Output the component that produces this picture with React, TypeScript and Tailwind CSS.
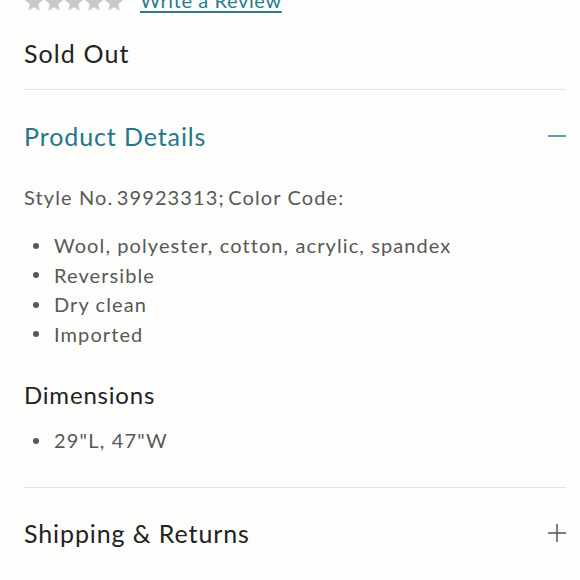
const Star = () => (
  <svg width="20" height="19" viewBox="0 0 24 23" className="fill-[#c9c9c9]">
    <path d="M12 0l3.1 7.6 8.2.6-6.3 5.3 2 8-7-4.4-7 4.4 2-8L.7 8.2l8.2-.6z" />
  </svg>
);

const Minus = () => (
  <svg width="18" height="18" viewBox="0 0 18 18" className="stroke-[#2a7d8e]">
    <line x1="0" y1="9" x2="18" y2="9" strokeWidth="1.5" />
  </svg>
);

const Plus = () => (
  <svg width="18" height="18" viewBox="0 0 18 18" className="stroke-[#555]">
    <line x1="0" y1="9" x2="18" y2="9" strokeWidth="1.5" />
    <line x1="9" y1="0" x2="9" y2="18" strokeWidth="1.5" />
  </svg>
);

const materials = ['Wool, polyester, cotton, acrylic, spandex', 'Reversible', 'Dry clean', 'Imported'];

export default function App() {
  return (
    <div
      className="w-[580px] h-[580px] overflow-hidden bg-[#fdfdfb] pl-[24px] pr-[14px] text-[#222]"
      style={{ fontFamily: 'Lato, "Noto Sans", sans-serif' }}
    >
      {/* rating row, cut off at the top */}
      <div className="flex items-end -mt-[12px] h-[24px]">
        <div className="flex">
          <Star />
          <Star />
          <Star />
          <Star />
          <Star />
        </div>
        <a className="ml-[16px] text-[20px] leading-[24px] text-[#2a7d8e] underline underline-offset-[3px] tracking-[0.6px]">
          Write a Review
        </a>
      </div>

      <div className="pt-[28px] pb-[23px] text-[25px] leading-[26px] tracking-[1.1px]">Sold Out</div>

      {/* Product Details */}
      <div className="border-t border-[#e2e2e0]">
        <div className="flex items-center justify-between pt-[32px] pb-[35px]">
          <span className="text-[25px] leading-[28px] text-[#21788a] tracking-[0.9px]">Product Details</span>
          <Minus />
        </div>
        <div className="text-[20px] leading-[24px] text-[#585858] tracking-[1.1px]">
          Style No.&thinsp;39923313;&thinsp;Color Code:
        </div>
        <ul className="mt-[22px] text-[20px] leading-[29.5px] text-[#585858] tracking-[1.1px]">
          {materials.map((m) => (
            <li key={m} className="flex items-center">
              <span className="w-[6px] h-[6px] rounded-full bg-[#585858] ml-[9px] mr-[15px]" />
              {m}
            </li>
          ))}
        </ul>
        <div className="mt-[33px] text-[24px] leading-[26px] tracking-[0.8px]">Dimensions</div>
        <ul className="mt-[18px] text-[20px] leading-[29px] text-[#585858] tracking-[1.2px]">
          <li className="flex items-center">
            <span className="w-[6px] h-[6px] rounded-full bg-[#585858] ml-[9px] mr-[15px]" />
            29"L, 47"W
          </li>
        </ul>
      </div>

      {/* Shipping */}
      <div className="mt-[32px] border-t border-[#e2e2e0]">
        <div className="flex items-center justify-between pt-[31px] pb-[30px]">
          <span className="text-[25px] leading-[28px] tracking-[0.9px]">Shipping &amp; Returns</span>
          <Plus />
        </div>
      </div>
    </div>
  );
}
